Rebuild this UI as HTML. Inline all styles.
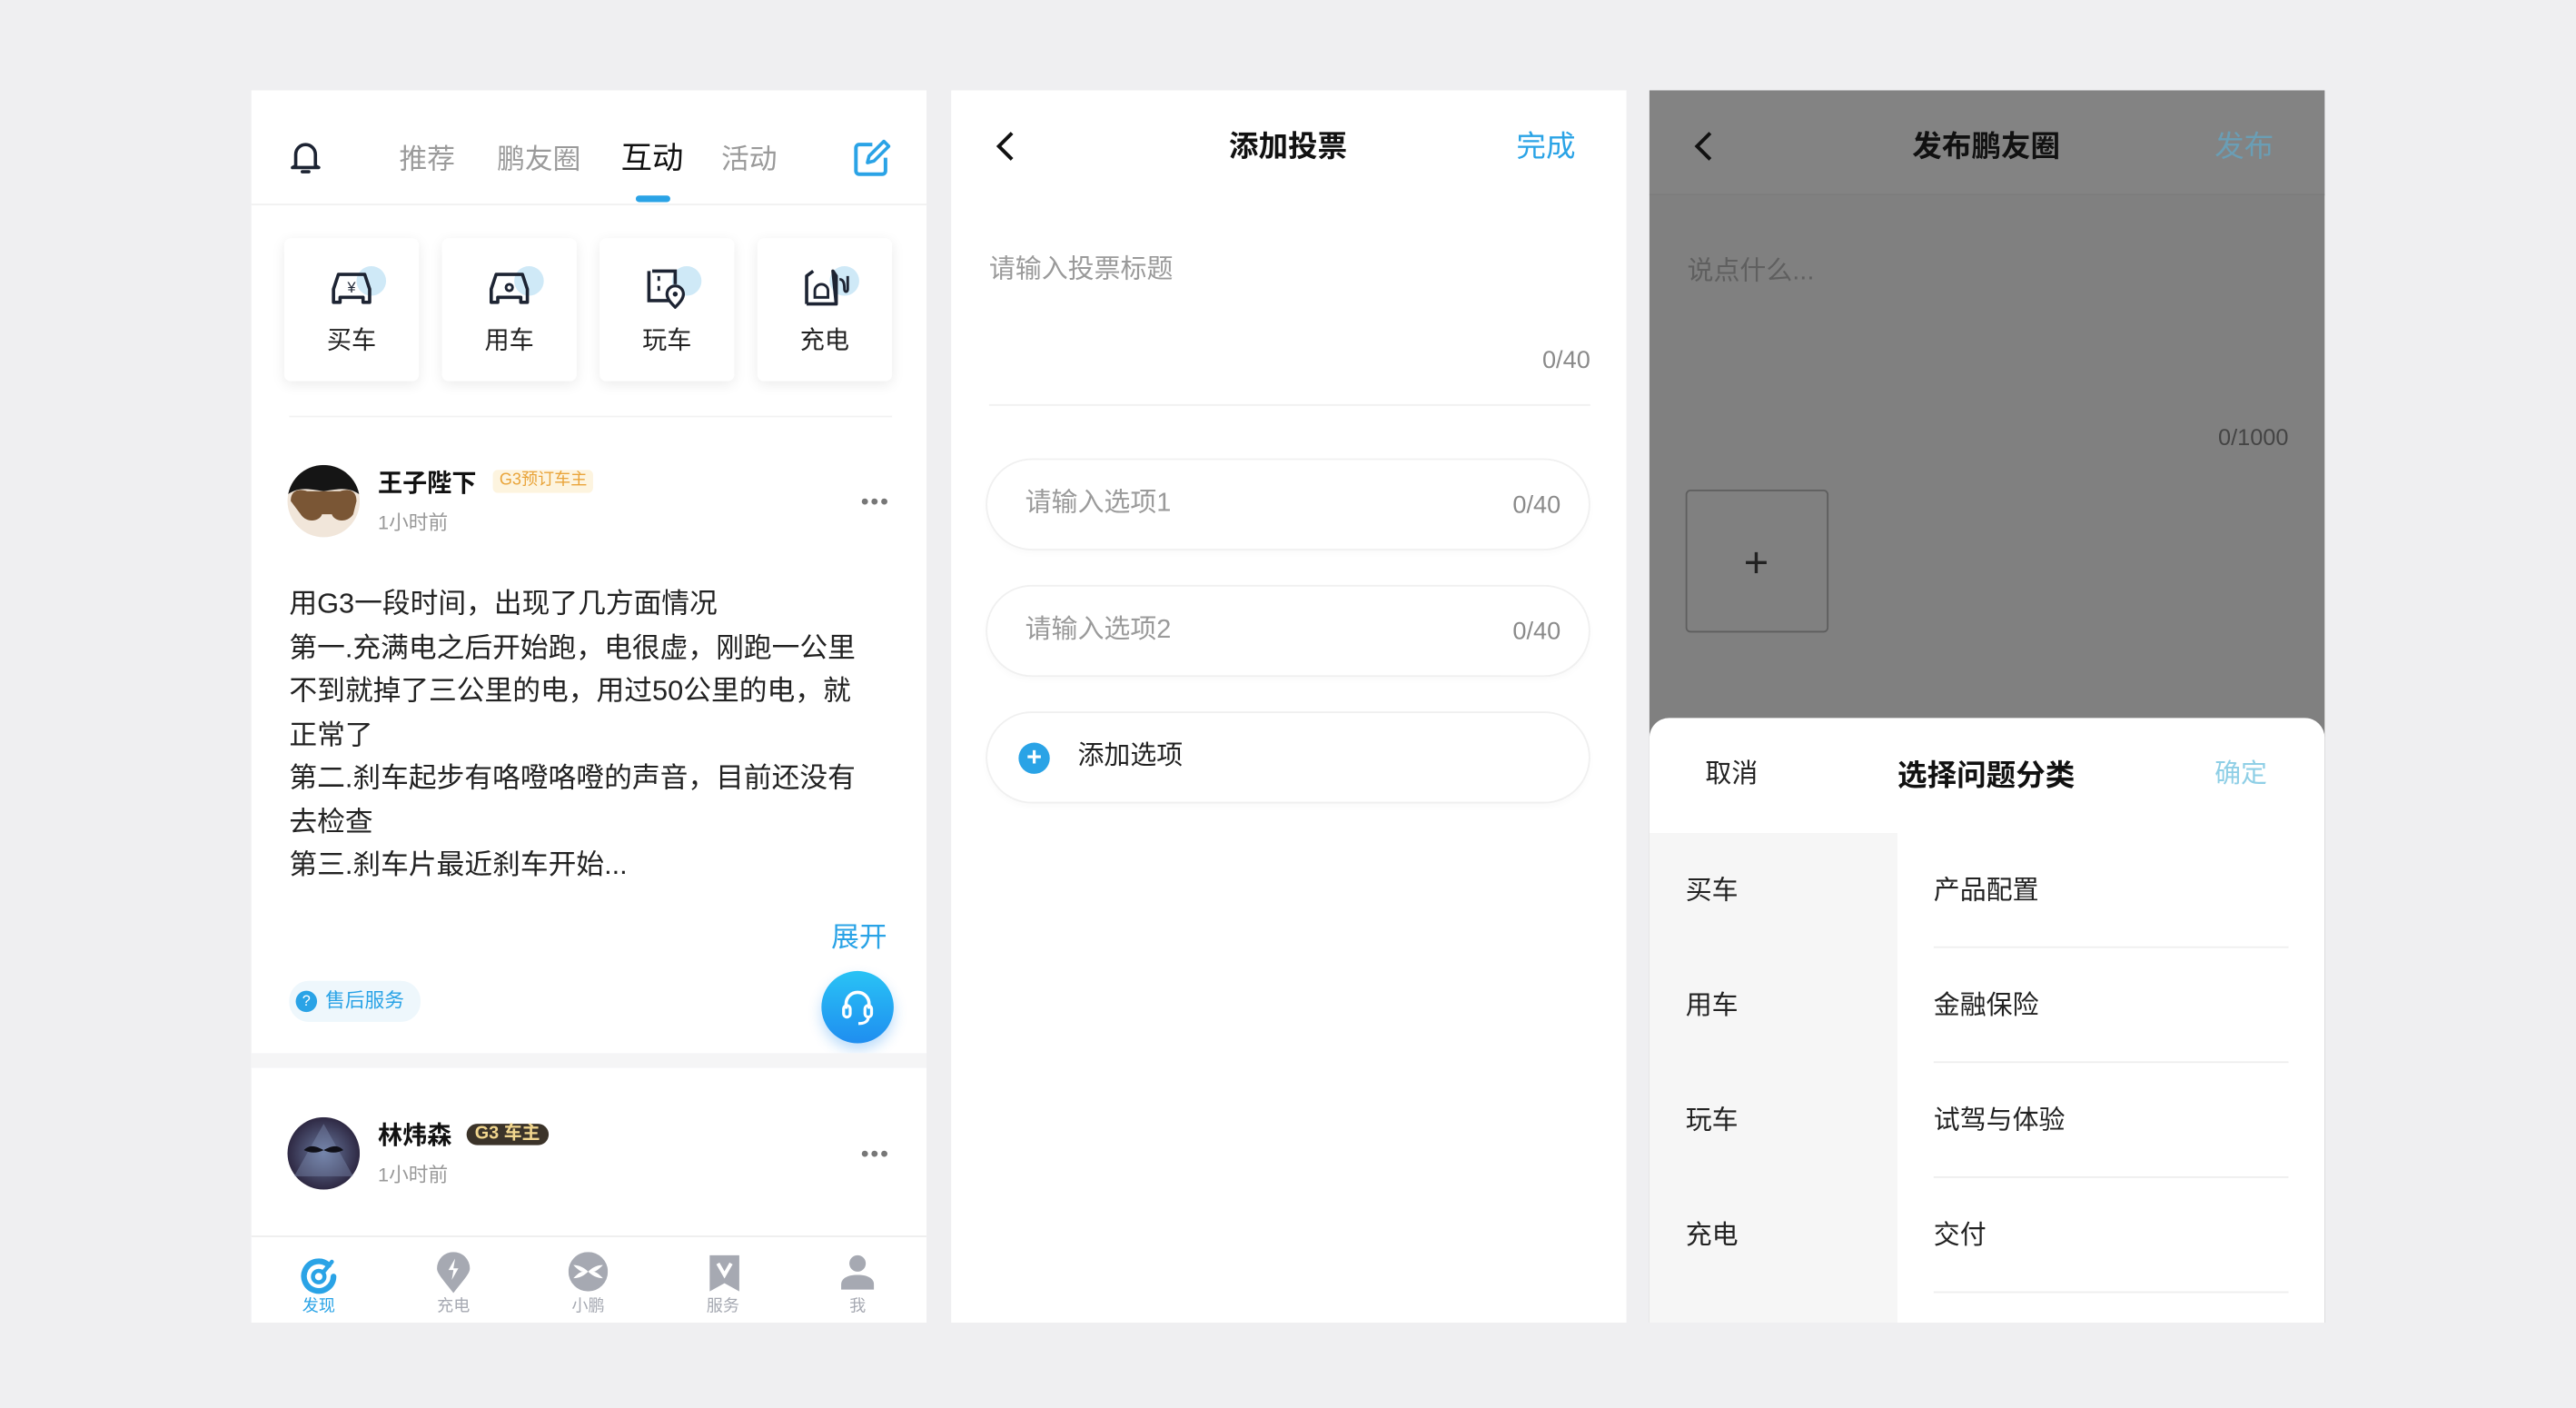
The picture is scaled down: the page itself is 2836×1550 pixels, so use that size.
<!DOCTYPE html>
<html><head><meta charset="utf-8"><style>
html,body{margin:0;padding:0;}
body{width:2836px;height:1550px;overflow:hidden;background:#efeff1;font-family:"Liberation Sans","Noto Sans CJK SC",sans-serif;}
#s{position:absolute;left:0;top:0;width:1568px;height:857px;transform:scale(1.80867);transform-origin:0 0;}
.a{position:absolute;white-space:nowrap;line-height:1;}
.p{position:absolute;top:55px;width:411px;height:750px;background:#fff;overflow:hidden;}
.card{position:absolute;top:90px;width:82px;height:87px;background:#fff;border-radius:4px;box-shadow:0 2px 8px rgba(0,0,0,0.08);}
.card svg{position:absolute;left:26px;top:17px;}
.card span{position:absolute;left:0;width:82px;top:51px;text-align:center;font-size:15px;color:#222;}
.pill{position:absolute;left:22px;width:366px;height:54px;border-radius:27px;box-shadow:0 0 0 1px #f0f0f0,0 2px 5px rgba(0,0,0,0.03);}
.c{transform:translate(-50%,-50%);}
</style></head><body><div id="s">

<!-- Panel 1 -->
<div class="p" style="left:153px;">
  <svg class="a" style="left:23px;top:30px" width="20" height="22" viewBox="0 0 20 22"><path d="M4 16V9a6 6 0 0 1 12 0v7l2 1H2z" fill="none" stroke="#1d2433" stroke-width="2" stroke-linejoin="round"/><path d="M8 19.5h4" stroke="#1d2433" stroke-width="2" stroke-linecap="round"/></svg>
  <div class="a c" style="left:107px;top:42px;font-size:17px;color:#9a9a9a">推荐</div>
  <div class="a c" style="left:175px;top:42px;font-size:17px;color:#9a9a9a">鹏友圈</div>
  <div class="a c" style="left:244px;top:42px;font-size:19px;color:#111">互动</div>
  <div class="a c" style="left:303px;top:42px;font-size:17px;color:#9a9a9a">活动</div>
  <div class="a" style="left:234px;top:64px;width:21px;height:4px;border-radius:2px;background:#2aa3e6"></div>
  <svg class="a" style="left:366px;top:30px" width="23" height="23" viewBox="0 0 23 23"><path d="M12 3H4a2 2 0 0 0-2 2v14a2 2 0 0 0 2 2h14a2 2 0 0 0 2-2v-8" fill="none" stroke="#2aa3e6" stroke-width="2.2"/><path d="M9 14l1-4 9-9 3 3-9 9z" fill="none" stroke="#2aa3e6" stroke-width="2" stroke-linejoin="round"/></svg>
  <div class="a" style="left:0;top:69px;width:411px;height:1px;background:#f0f0f0"></div>

  <div class="card" style="left:20px"><svg width="40" height="26" viewBox="0 0 40 26"><circle cx="27" cy="9" r="9" fill="#cfe9f7"/><path d="M4 22V14l3-9h16l3 9v8h-4v-3H8v3z" fill="none" stroke="#1d2433" stroke-width="2" stroke-linejoin="round"/><text x="15" y="16" font-size="9" text-anchor="middle" fill="#1d2433" font-family="Liberation Sans">¥</text></svg><span>买车</span></div>
  <div class="card" style="left:116px"><svg width="40" height="26" viewBox="0 0 40 26"><circle cx="27" cy="9" r="9" fill="#cfe9f7"/><path d="M4 22V14l3-9h16l3 9v8h-4v-3H8v3z" fill="none" stroke="#1d2433" stroke-width="2" stroke-linejoin="round"/><circle cx="15" cy="13" r="2" fill="none" stroke="#1d2433" stroke-width="1.6"/></svg><span>用车</span></div>
  <div class="card" style="left:212px"><svg width="40" height="26" viewBox="0 0 40 26"><circle cx="27" cy="9" r="9" fill="#cfe9f7"/><path d="M6 3h14v8M20 21H4V3" fill="none" stroke="#1d2433" stroke-width="2"/><path d="M10 6v3M10 12v3" stroke="#1d2433" stroke-width="1.6"/><path d="M20 25c-4-4-5-6-5-8a5 5 0 0 1 10 0c0 2-1 4-5 8z" fill="#fff" stroke="#1d2433" stroke-width="1.8"/><circle cx="20" cy="17" r="1.5" fill="#1d2433"/></svg><span>玩车</span></div>
  <div class="card" style="left:308px"><svg width="40" height="26" viewBox="0 0 40 26"><circle cx="27" cy="9" r="9" fill="#cfe9f7"/><path d="M4 23V6l4-3M20 3l2 3v17zM4 23h18" fill="none" stroke="#1d2433" stroke-width="2" stroke-linejoin="round"/><path d="M9 19v-4a4 4 0 0 1 8 0v4z" fill="none" stroke="#1d2433" stroke-width="1.6"/><path d="M24 8c3 0 3 4 3 6s2 2 2 0V6" fill="none" stroke="#1d2433" stroke-width="1.6"/></svg><span>充电</span></div>

  <div class="a" style="left:23px;top:198px;width:367px;height:1px;background:#f2f2f2"></div>

  <svg class="a" style="left:22px;top:228px" width="44" height="44" viewBox="0 0 44 44"><clipPath id="c1"><circle cx="22" cy="22" r="22"/></clipPath><g clip-path="url(#c1)"><rect width="44" height="44" fill="#f1e6da"/><path d="M0 0h44v18c-6-4-10-4-22-2-12-2-16-2-22 2z" fill="#151515"/><path d="M2 22c0-6 4-8 10-6h20c6-2 10 0 10 6l-2 8c-4 6-12 4-13 0h-6c-1 4-9 6-13 0z" fill="#7a5635"/><path d="M4 40c8 6 28 6 36 0v4H4z" fill="#ddd"/></g></svg>
  <div class="a" style="left:77px;top:232px;font-size:15px;font-weight:bold;color:#111">王子陛下</div>
  <div class="a" style="left:147px;top:231px;padding:2px 4px;font-size:10px;color:#e9a43a;background:#fdf4df;border-radius:3px">G3预订车主</div>
  <div class="a" style="left:77px;top:257px;font-size:12px;color:#999">1小时前</div>
  <div class="a" style="left:371px;top:243px;font-size:14px;color:#777;letter-spacing:1px">•••</div>

  <div class="a" style="left:23px;top:300px;font-size:17px;color:#222;line-height:26.5px">用G3一段时间，出现了几方面情况<br>第一.充满电之后开始跑，电很虚，刚跑一公里<br>不到就掉了三公里的电，用过50公里的电，就<br>正常了<br>第二.刹车起步有咯噔咯噔的声音，目前还没有<br>去检查<br>第三.刹车片最近刹车开始...</div>
  <div class="a" style="left:353px;top:507px;font-size:17px;color:#2aa3e6">展开</div>

  <div class="a" style="left:23px;top:542px;width:80px;height:25px;border-radius:12px;background:#eef7fc"></div>
  <div class="a" style="left:27px;top:548px;width:13px;height:13px;border-radius:50%;background:#2aa3e6;color:#fff;font-size:9px;text-align:center;line-height:13px">?</div>
  <div class="a" style="left:45px;top:548px;font-size:12px;color:#2aa3e6">售后服务</div>
  <div class="a" style="left:347px;top:536px;width:44px;height:44px;border-radius:50%;background:linear-gradient(#29c3f5,#1f8ef0);box-shadow:0 4px 8px rgba(30,140,240,0.3)"></div>
  <svg class="a" style="left:358px;top:546px" width="22" height="24" viewBox="0 0 22 24"><path d="M4 13V10a7 7 0 0 1 14 0v3" fill="none" stroke="#fff" stroke-width="2"/><rect x="2.5" y="11" width="4" height="7" rx="2" fill="none" stroke="#fff" stroke-width="1.8"/><rect x="15.5" y="11" width="4" height="7" rx="2" fill="none" stroke="#fff" stroke-width="1.8"/><path d="M17.5 18c0 3-3 4-6 4" fill="none" stroke="#fff" stroke-width="1.8"/></svg>

  <div class="a" style="left:0;top:586px;width:411px;height:9px;background:#f5f5f6"></div>

  <svg class="a" style="left:22px;top:625px" width="44" height="44" viewBox="0 0 44 44"><defs><radialGradient id="g2" cx="0.5" cy="0.5" r="0.6"><stop offset="0" stop-color="#6a7aa0"/><stop offset="1" stop-color="#221830"/></radialGradient></defs><circle cx="22" cy="22" r="22" fill="url(#g2)"/><path d="M22 4L40 36H4z" fill="#8a9cc0" opacity="0.35"/><path d="M10 20c4-4 8-2 12 0 4-2 8-4 12 0-4 2-8 2-12 0-4 2-8 2-12 0z" fill="#101018"/></svg>
  <div class="a" style="left:77px;top:629px;font-size:15px;font-weight:bold;color:#111">林炜森</div>
  <div class="a" style="left:131px;top:629px;padding:1px 5px;font-size:11px;color:#f1d68e;background:#3b3329;border-radius:8px;font-weight:bold">G3 车主</div>
  <div class="a" style="left:77px;top:654px;font-size:12px;color:#999">1小时前</div>
  <div class="a" style="left:371px;top:640px;font-size:14px;color:#777;letter-spacing:1px">•••</div>

  <div class="a" style="left:0;top:697px;width:411px;height:53px;background:#fff;border-top:1px solid #eee"></div>
  <svg class="a" style="left:29px;top:709px" width="24" height="24" viewBox="0 0 24 24"><path d="M18 6A9 9 0 1 0 21 13" fill="none" stroke="#2aa3e6" stroke-width="3.5" stroke-linecap="round"/><circle cx="12" cy="13" r="3.5" fill="none" stroke="#2aa3e6" stroke-width="2.5"/><path d="M15 10l5-6" stroke="#2aa3e6" stroke-width="2.5" stroke-linecap="round"/></svg>
  <svg class="a" style="left:112px;top:707px" width="22" height="26" viewBox="0 0 22 26"><path d="M11 25C4 16 1 13 1 10a10 10 0 0 1 20 0c0 3-3 6-10 15z" fill="#a6a9b2"/><path d="M12 4l-4 7h3l-1 6 4-7h-3z" fill="#fff"/></svg>
  <svg class="a" style="left:193px;top:707px" width="24" height="24" viewBox="0 0 24 24"><circle cx="12" cy="12" r="12" fill="#a6a9b2"/><path d="M3 8c4 0 7 2 9 4 2-2 5-4 9-4-2 2-4 4-6 4 2 0 4 2 6 4-4 0-7-2-9-4-2 2-5 4-9 4 2-2 4-4 6-4-2 0-4-2-6-4z" fill="#fff"/></svg>
  <svg class="a" style="left:278px;top:708px" width="20" height="24" viewBox="0 0 20 24"><path d="M1 1h18v22l-9-5-9 5z" fill="#a6a9b2"/><path d="M6 6l4 7 4-7" fill="none" stroke="#fff" stroke-width="2.2"/></svg>
  <svg class="a" style="left:359px;top:708px" width="20" height="22" viewBox="0 0 20 22"><circle cx="10" cy="6" r="5" fill="#a6a9b2"/><path d="M0 22v-3c0-4 4-6 10-6s10 2 10 6v3z" fill="#a6a9b2"/></svg>
  <div class="a c" style="left:41px;top:741px;font-size:10px;color:#2aa3e6">发现</div>
  <div class="a c" style="left:123px;top:741px;font-size:10px;color:#a6a9b2">充电</div>
  <div class="a c" style="left:205px;top:741px;font-size:10px;color:#a6a9b2">小鹏</div>
  <div class="a c" style="left:287px;top:741px;font-size:10px;color:#a6a9b2">服务</div>
  <div class="a c" style="left:369px;top:741px;font-size:10px;color:#a6a9b2">我</div>
</div>

<!-- Panel 2 -->
<div class="p" style="left:579px;">
  <svg class="a" style="left:27px;top:24px" width="12" height="20" viewBox="0 0 12 20"><path d="M10 2L2 10l8 8" fill="none" stroke="#111" stroke-width="2.2"/></svg>
  <div class="a c" style="left:205px;top:34px;font-size:18px;font-weight:bold;color:#111">添加投票</div>
  <div class="a c" style="left:362px;top:34px;font-size:18px;color:#2aa3e6">完成</div>
  <div class="a" style="left:23px;top:102px;font-size:16px;color:#9a9a9a">请输入投票标题</div>
  <div class="a" style="right:22px;top:157px;font-size:15px;color:#8a8a8a">0/40</div>
  <div class="a" style="left:23px;top:191px;width:366px;height:1px;background:#f0f0f0"></div>
  <div class="pill" style="top:225px"></div>
  <div class="a" style="left:45px;top:244px;font-size:16px;color:#9a9a9a">请输入选项1</div>
  <div class="a" style="right:40px;top:245px;font-size:15px;color:#8a8a8a">0/40</div>
  <div class="pill" style="top:302px"></div>
  <div class="a" style="left:45px;top:321px;font-size:16px;color:#9a9a9a">请输入选项2</div>
  <div class="a" style="right:40px;top:322px;font-size:15px;color:#8a8a8a">0/40</div>
  <div class="pill" style="top:379px"></div>
  <div class="a" style="left:41px;top:397px;width:19px;height:19px;border-radius:50%;background:#2aa3e6;color:#fff;font-size:16px;font-weight:bold;text-align:center;line-height:19px">+</div>
  <div class="a" style="left:77px;top:398px;font-size:16px;color:#222">添加选项</div>
</div>

<!-- Panel 3 -->
<div class="p" style="left:1004px;background:#808080;">
  <div class="a" style="left:0;top:0;width:411px;height:63px;background:#838383;border-bottom:1px solid #7c7c7c"></div>
  <svg class="a" style="left:27px;top:24px" width="12" height="20" viewBox="0 0 12 20"><path d="M10 2L2 10l8 8" fill="none" stroke="#111" stroke-width="2.2"/></svg>
  <div class="a c" style="left:205px;top:34px;font-size:18px;font-weight:bold;color:#111">发布鹏友圈</div>
  <div class="a c" style="left:362px;top:34px;font-size:18px;color:#6a9eb5">发布</div>
  <div class="a" style="left:23px;top:103px;font-size:16px;color:#5f5f5f">说点什么...</div>
  <div class="a" style="right:22px;top:204px;font-size:14px;color:#444">0/1000</div>
  <div class="a" style="left:22px;top:243px;width:85px;height:85px;border:1px solid #5e5e5e;border-radius:3px"></div>
  <div class="a c" style="left:65px;top:287px;font-size:26px;color:#222">+</div>

  <div class="a" style="left:0;top:382px;width:411px;height:380px;background:#fff;border-radius:12px 12px 0 0"></div>
  <div class="a c" style="left:50px;top:417px;font-size:16px;color:#222">取消</div>
  <div class="a c" style="left:205px;top:417px;font-size:18px;font-weight:bold;color:#111">选择问题分类</div>
  <div class="a c" style="left:360px;top:417px;font-size:16px;color:#8fcfe6">确定</div>
  <div class="a" style="left:0;top:452px;width:151px;height:300px;background:#f6f6f6"></div>
  <div class="a" style="left:22px;top:480px;font-size:16px;color:#222">买车</div>
  <div class="a" style="left:22px;top:550px;font-size:16px;color:#222">用车</div>
  <div class="a" style="left:22px;top:620px;font-size:16px;color:#222">玩车</div>
  <div class="a" style="left:22px;top:690px;font-size:16px;color:#222">充电</div>
  <div class="a" style="left:173px;top:480px;font-size:16px;color:#222">产品配置</div>
  <div class="a" style="left:173px;top:550px;font-size:16px;color:#222">金融保险</div>
  <div class="a" style="left:173px;top:620px;font-size:16px;color:#222">试驾与体验</div>
  <div class="a" style="left:173px;top:690px;font-size:16px;color:#222">交付</div>
  <div class="a" style="left:173px;top:521px;width:216px;height:1px;background:#eee"></div>
  <div class="a" style="left:173px;top:591px;width:216px;height:1px;background:#eee"></div>
  <div class="a" style="left:173px;top:661px;width:216px;height:1px;background:#eee"></div>
  <div class="a" style="left:173px;top:731px;width:216px;height:1px;background:#eee"></div>
</div>

</div></body></html>
